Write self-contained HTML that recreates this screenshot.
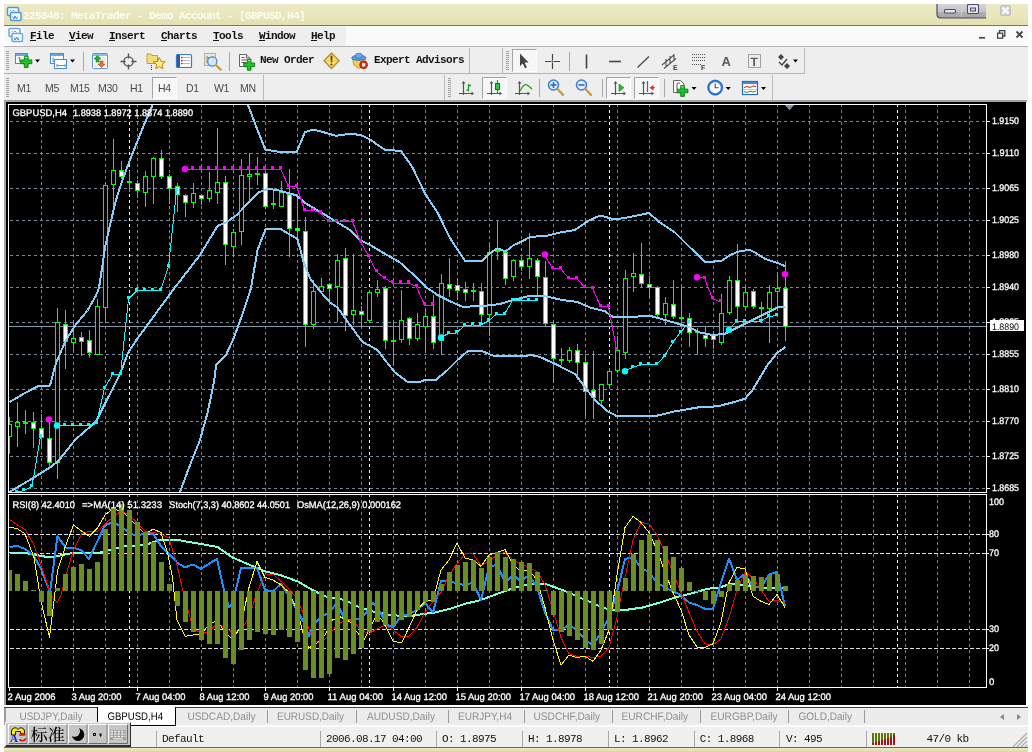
<!DOCTYPE html>
<html><head><meta charset="utf-8"><title>225848: MetaTrader - Demo Account - [GBPUSD,H4]</title>
<style>
*{box-sizing:border-box;margin:0;padding:0}
html,body{width:1032px;height:752px;overflow:hidden;background:#fff}
svg text{text-rendering:geometricPrecision}
.chart text[fill="#fff"]{stroke:#fff;stroke-width:.3px}
#win{will-change:transform}
body{position:relative;font-family:"Liberation Sans","Noto Sans CJK SC",sans-serif;font-size:11px;color:#000}
.abs{position:absolute}
#win{position:absolute;left:4px;top:4px;width:1024px;height:748px;background:#eeeeee;overflow:hidden}
#title{position:absolute;left:0;top:0;width:1024px;height:21px;background:linear-gradient(#ece9c8,#e9e5bc 60%,#e5e0b0)}
#title .t{position:absolute;left:19px;top:6px;font-family:"Liberation Mono",monospace;font-weight:bold;font-size:11px;color:#fdfcee;letter-spacing:-0.6px;white-space:pre}
#tline{position:absolute;left:0;top:21px;width:1024px;height:1px;background:#777770}
#menu{position:absolute;left:0;top:22px;width:1024px;height:20px;background:#fafafa}
#menu .m{position:absolute;top:4px;font-family:"Liberation Mono",monospace;font-weight:bold;font-size:11px;color:#111;white-space:pre;letter-spacing:-0.6px}
#menu .m::first-letter{text-decoration:underline}
#mline{position:absolute;left:0;top:42px;width:1024px;height:1px;background:#b4b4b4}
.tb{position:absolute;background:#eeeeee;height:26px}
.sep{position:absolute;width:1px;background:#a8a8a8}
.grip{position:absolute;width:3px;background:repeating-linear-gradient(#a0a0a0 0 1px,transparent 1px 2px)}
.tf{position:absolute;top:82px;font-size:10.5px;color:#4a4a4a;letter-spacing:-0.35px}
.btnp{position:absolute;border:1px solid #a4a4a4;border-right-color:#fdfdfd;border-bottom-color:#fdfdfd;background:#f7f7f7}
.tbt{position:absolute;font-family:"Liberation Mono",monospace;font-weight:bold;font-size:11px;letter-spacing:-0.6px;color:#111;white-space:pre}
#tabs{position:absolute;left:0;top:703px;width:1024px;height:17px;background:#f0f0f0}
.tab{position:absolute;top:2px;font-size:11px;color:#8c8c8c;white-space:pre}
.tsep{position:absolute;top:4px;width:1px;height:11px;background:#9a9a9a}
#status{position:absolute;left:0;top:720px;width:1024px;height:23px;background:#f0f0f0}
.st{position:absolute;top:5px;font-family:"Liberation Mono",monospace;font-size:11px;letter-spacing:-0.6px;color:#111;white-space:pre}
.ssep{position:absolute;top:3px;width:1px;height:17px;background:#a8a8a8}
</style></head>
<body>
<div id="win">
<div id="title"><div class="t">225848: MetaTrader - Demo Account - [GBPUSD,H4]</div></div><div id="tline"></div>
<div id="menu"><div class="abs" style="left:20px;top:1px;width:322px;height:19px;background:#eeeeee"></div><div class="m" style="left:26px">File</div><div class="m" style="left:65px">View</div><div class="m" style="left:105px">Insert</div><div class="m" style="left:157px">Charts</div><div class="m" style="left:209px">Tools</div><div class="m" style="left:255px">Window</div><div class="m" style="left:307px">Help</div></div><div id="mline"></div>
<div class="tb" style="left:0;top:43px;width:1024px;height:27px"></div>
<div class="abs" style="left:0;top:69px;width:801px;height:1px;background:#b4b4b4"></div><div class="abs" style="left:0;top:70px;width:802px;height:1px;background:#fafafa"></div>
<div class="tb" style="left:0;top:70px;width:1024px;height:26px"></div>
<div class="grip" style="left:2px;top:47px;height:19px"></div><div class="grip" style="left:502px;top:47px;height:19px"></div><div class="grip" style="left:2px;top:74px;height:19px"></div><div class="grip" style="left:444px;top:74px;height:19px"></div><div class="sep" style="left:79px;top:48px;height:19px"></div><div class="sep" style="left:225px;top:48px;height:19px"></div><div class="sep" style="left:565px;top:48px;height:19px"></div><div class="sep" style="left:535px;top:75px;height:18px"></div><div class="sep" style="left:598px;top:75px;height:18px"></div><div class="sep" style="left:660px;top:75px;height:18px"></div><div class="sep" style="left:465px;top:44px;height:25px;background:#b8b8b8"></div><div class="sep" style="left:498px;top:44px;height:25px;background:#b8b8b8"></div><div class="sep" style="left:800px;top:44px;height:25px;background:#b8b8b8"></div><div class="sep" style="left:259px;top:71px;height:25px;background:#b8b8b8"></div><div class="sep" style="left:440px;top:71px;height:25px;background:#b8b8b8"></div><div class="sep" style="left:768px;top:71px;height:25px;background:#b8b8b8"></div><div class="btnp" style="left:508px;top:45px;width:25px;height:23px"></div><div class="btnp" style="left:148px;top:73px;width:25px;height:22px"></div><div class="btnp" style="left:478px;top:73px;width:25px;height:22px"></div><div class="btnp" style="left:602px;top:73px;width:25px;height:22px"></div><div class="btnp" style="left:630px;top:73px;width:25px;height:22px"></div><div class="tf" style="left:13px;top:78px">M1</div><div class="tf" style="left:41px;top:78px">M5</div><div class="tf" style="left:66px;top:78px">M15</div><div class="tf" style="left:94px;top:78px">M30</div><div class="tf" style="left:126px;top:78px">H1</div><div class="tf" style="left:154px;top:78px">H4</div><div class="tf" style="left:182px;top:78px">D1</div><div class="tf" style="left:210px;top:78px">W1</div><div class="tf" style="left:236px;top:78px">MN</div><div class="tbt" style="left:256px;top:50px">New Order</div><div class="tbt" style="left:370px;top:50px">Expert Advisors</div>
<svg class="abs" style="left:0;top:42px" width="1024" height="56" viewBox="4 46 1024 56"><rect x="15.5" y="53.5" width="12" height="10" fill="#fff" stroke="#4a8ad0"/><rect x="16" y="54" width="11" height="2" fill="#6aa8e8"/><path d="M19.5 57v5M18 58.5l1.5-1.5 1.5 1.5" stroke="#7a8aa0" fill="none"/><path d="M24.3 56.199999999999996h3.8v3.6999999999999997h3.6999999999999997v3.8h-3.6999999999999997v3.6999999999999997h-3.8v-3.6999999999999997h-3.6999999999999997v-3.8h3.6999999999999997z" fill="#1fc02a" stroke="#0a7a12" stroke-width="0.9"/><path d="M24.8 57.4h2.8" stroke="#8cf08c" stroke-width="1"/><path d="M35 59.5h5l-2.5 3z" fill="#000"/><rect x="50.5" y="53.5" width="13" height="10" fill="#fff" stroke="#4a8ad0"/><rect x="51" y="54" width="12" height="2" fill="#6aa8e8"/><path d="M53 57v5M53 61.5h8" stroke="#7a8aa0" fill="none"/><rect x="54.5" y="59.5" width="12" height="9" fill="#fff" stroke="#4a8ad0"/><path d="M57 65.5h8M57 64v3M65 64v3" stroke="#7a8aa0" fill="none"/><path d="M70 59.5h5l-2.5 3z" fill="#000"/><rect x="92.5" y="53.5" width="15" height="15" rx="1" fill="#fff" stroke="#5a96dc"/><rect x="93" y="54" width="14" height="2" fill="#8abcf0"/><path d="M102 58h4M102 60h4M102 62h4M94 64h4M94 66h4" stroke="#d8d8d8"/><path d="M97.5 55.5l3.5 3.5h-2v3h-3v-3h-2z" fill="#22b030" stroke="#0c7a14" stroke-width="0.6"/><path d="M101.5 67.5l3.5-3.5h-2v-3h-3v3h-2z" fill="#f07030" stroke="#b03808" stroke-width="0.6"/><circle cx="128.5" cy="61.5" r="4.6" fill="none" stroke="#555" stroke-width="1.4"/><path d="M128.5 53.5v5M128.5 64.5v5M120.5 61.5h5M131.5 61.5h5" stroke="#555" stroke-width="1.4"/><path d="M147 56v-2h4l1 1.5h5.5v8h-10.5z" fill="#f4dc78" stroke="#b8962a" stroke-width="0.9"/><path d="M151.5 65v5" stroke="#333" stroke-dasharray="1 1"/><path d="M159.3 57.6l1.7 3.8 4.1.4-3.1 2.8.9 4.1-3.6-2.1-3.6 2.1.9-4.1-3.1-2.8 4.1-.4z" fill="#fff08a" stroke="#b8860b" stroke-width="1"/><rect x="176.5" y="54.5" width="15" height="13" rx="1" fill="#fff" stroke="#3a78c8" stroke-width="1.2"/><rect x="177" y="55" width="3" height="12" fill="#2a5aa8"/><path d="M181 57.5h9M181 60.5h9M181 63.5h9" stroke="#a8b8e0"/><path d="M181 57.5h1.5M181 60.5h1.5M181 63.5h1.5" stroke="#e02020" stroke-width="1.4"/><rect x="204.5" y="53.5" width="11" height="12" fill="#ece6d4" stroke="#b8b09a"/><path d="M207 56v7M213 56v7M207 57.5h6" stroke="#8a8a8a" fill="none"/><circle cx="212.3" cy="61.5" r="4.6" fill="#d8e6fa" fill-opacity="0.85" stroke="#4a8ae0" stroke-width="1.3"/><path d="M215.8 65l5 4.6" stroke="#c8a038" stroke-width="2.2" stroke-linecap="round"/><path d="M239.5 54.5h7l3.5 3.5v8.5h-10.5z" fill="#fff" stroke="#666"/><path d="M246.5 54.5v3.5h3.5" fill="#ddd" stroke="#666"/><path d="M241.5 57.5h3M241.5 60h6M241.5 62.5h5" stroke="#555" stroke-width="1.2"/><path d="M247.39999999999998 59.4h3.6v3.6000000000000005h3.6000000000000005v3.6h-3.6000000000000005v3.6000000000000005h-3.6v-3.6000000000000005h-3.6000000000000005v-3.6h3.6000000000000005z" fill="#1fc02a" stroke="#0a7a12" stroke-width="0.9"/><path d="M247.89999999999998 60.6h2.6" stroke="#8cf08c" stroke-width="1"/><path d="M331.5 53l7.5 7.7-7.5 7.7-7.5-7.7z" fill="#f8e070" stroke="#b89020" stroke-width="1.4"/><path d="M331.5 56.5v5" stroke="#7a2a10" stroke-width="1.8" stroke-linecap="round"/><circle cx="331.5" cy="64.5" r="1.1" fill="#7a2a10"/><path d="M326 60.7h11" stroke="#d8b840" stroke-width="0.7"/><path d="M352.5 59h13l-1.5 6-5 3.5-5-3.5z" fill="#f4d050" stroke="#b88a18" stroke-width="0.8"/><ellipse cx="358.8" cy="57.8" rx="7.2" ry="2.6" fill="#5a9ae0" stroke="#2a68b8" stroke-width="0.7"/><ellipse cx="358.8" cy="55.8" rx="3.6" ry="2.6" fill="#6aaaf0" stroke="#2a68b8" stroke-width="0.7"/><circle cx="363.6" cy="64.8" r="3.9" fill="#e03010" stroke="#a01800" stroke-width="0.8"/><rect x="362" y="63.2" width="3.2" height="3.2" fill="#fff"/><path d="M520 53.5v12.5l2.8-2.6 2.2 4.9 1.9-.9-2.2-4.8h3.9z" fill="#444"/><path d="M552.5 54v15M545 61.5h15" stroke="#444" stroke-width="1.2"/><rect x="551.5" y="60.5" width="2" height="2" fill="#eee"/><rect x="552" y="61" width="1" height="1" fill="#444"/><path d="M586.5 54.5v14" stroke="#444" stroke-width="1.6"/><path d="M609 61.5h12" stroke="#444" stroke-width="1.6"/><path d="M637.5 67.5l11.5-11" stroke="#555" stroke-width="1.5"/><path d="M662 65l12-10M664 68.5l12-10M666 59v8M670 56v8M674 54v7" stroke="#555" stroke-width="1.1" fill="none"/><text x="673" y="70" font-family="Liberation Sans,sans-serif" font-weight="bold" font-size="7" fill="#333">E</text><path d="M692 54.5h13M692 57.5h13M692 60.5h13M692 64.5h9" stroke="#555" stroke-dasharray="1 1"/><text x="701" y="70" font-family="Liberation Sans,sans-serif" font-weight="bold" font-size="7" fill="#333">F</text><text x="721.5" y="66" font-family="Liberation Sans,sans-serif" font-weight="bold" font-size="13" fill="#5a5a5a">A</text><rect x="748.5" y="54.5" width="12" height="13" fill="none" stroke="#555" stroke-dasharray="1 1"/><text x="750.6" y="66" font-family="Liberation Sans,sans-serif" font-weight="bold" font-size="12" fill="#5a5a5a">T</text><path d="M778 57l3-3 3 3-3 3zM784 66l3-3 3 3-3 3z" fill="#444"/><path d="M779 62l3 3 5-6" stroke="#444" stroke-width="1.4" fill="none"/><path d="M793 59.5h5l-2.5 3z" fill="#000"/><path d="M463.5 82v13M459 93.5h14" stroke="#555" stroke-width="1.2" fill="none"/><path d="M463.5 81l-2 2.5h4zM474 93.5l-2.5-2v4z" fill="#555"/><path d="M468.5 84v7.5M468.5 85.5h2.5M466.5 90h2" stroke="#1aa020" stroke-width="1.3" fill="none"/><path d="M491.5 82v13M487 93.5h14" stroke="#555" stroke-width="1.2" fill="none"/><path d="M491.5 81l-2 2.5h4zM502 93.5l-2.5-2v4z" fill="#555"/><path d="M497.5 80v13" stroke="#1aa020" stroke-width="1.2"/><rect x="495.5" y="83.5" width="4" height="6" fill="#30c838" stroke="#0a7a12"/><path d="M519.5 82v13M515 93.5h14" stroke="#555" stroke-width="1.2" fill="none"/><path d="M519.5 81l-2 2.5h4zM530 93.5l-2.5-2v4z" fill="#555"/><path d="M520 91q4-8 7-6t5 4" stroke="#1aa020" stroke-width="1.2" fill="none"/><circle cx="553.5" cy="85" r="5" fill="#e4effc" stroke="#3a80e0" stroke-width="1.6"/><path d="M557.5 89l5.5 5.8" stroke="#c8a038" stroke-width="2.4" stroke-linecap="round"/><path d="M550.5 85h6" stroke="#2a68c8" stroke-width="1.6"/><path d="M553.5 82v6" stroke="#2a68c8" stroke-width="1.6"/><circle cx="581.5" cy="85" r="5" fill="#e4effc" stroke="#3a80e0" stroke-width="1.6"/><path d="M585.5 89l5.5 5.8" stroke="#c8a038" stroke-width="2.4" stroke-linecap="round"/><path d="M578.5 85h6" stroke="#2a68c8" stroke-width="1.6"/><path d="M615.5 82v13M611 93.5h14" stroke="#555" stroke-width="1.2" fill="none"/><path d="M615.5 81l-2 2.5h4zM626 93.5l-2.5-2v4z" fill="#555"/><path d="M619 84l5 3.7-5 3.7z" fill="#28c030" stroke="#0a7a12" stroke-width="0.6"/><path d="M643.5 82v13M639 93.5h14" stroke="#555" stroke-width="1.2" fill="none"/><path d="M643.5 81l-2 2.5h4zM654 93.5l-2.5-2v4z" fill="#555"/><path d="M647.5 81v11" stroke="#2a68c8" stroke-width="1.2"/><path d="M649.5 87.7l4-2.7v5.4z" fill="#d03010"/><path d="M652 87.7h3" stroke="#d03010"/><path d="M673.500 80.500h7l3.500 3.500v8.500h-10.500z" fill="#fff" stroke="#666"/><path d="M677 83.500v6M677 83.500q2-1.500 3 0" stroke="#555" fill="none"/><path d="M680.7 85.6h3.6v3.6000000000000005h3.6000000000000005v3.6h-3.6000000000000005v3.6000000000000005h-3.6v-3.6000000000000005h-3.6000000000000005v-3.6h3.6000000000000005z" fill="#1fc02a" stroke="#0a7a12" stroke-width="0.9"/><path d="M681.2 86.8h2.6" stroke="#8cf08c" stroke-width="1"/><path d="M691.5 87h5l-2.5 3z" fill="#000"/><circle cx="715.2" cy="87.6" r="6.6" fill="#fff" stroke="#2a78e0" stroke-width="2"/><circle cx="715.2" cy="87.6" r="7.6" fill="none" stroke="#1a58b0" stroke-width="0.6"/><path d="M715.2 83.500v4.300h3.300" stroke="#444" stroke-width="1.1" fill="none"/><path d="M725.7 87h5l-2.5 3z" fill="#000"/><rect x="742.5" y="81.500" width="15" height="13" fill="#fff" stroke="#2a68c8" stroke-width="1.2"/><rect x="743" y="82" width="14" height="2" fill="#4a88e0"/><path d="M744 87.500l3-1 3 1 3-1.500 3 .5" stroke="#c82010" fill="none"/><path d="M744 91.500l3 1 3-1.500 3 1 3-1" stroke="#18a028" fill="none"/><path d="M743 89.500h14" stroke="#ccc"/><path d="M761 87h5l-2.5 3z" fill="#000"/></svg><svg class="abs" style="left:0;top:0" width="1024" height="42" viewBox="4 4 1024 42"><rect x="7.5" y="7.5" width="11" height="8" rx="1.2" fill="#fff" stroke="#4a96e0" stroke-width="1.5" /><path d="M9.5 11.5l1.5-1.5M12 11.5l1.5-1.5 1.500 1.500" stroke="#4a96e0" stroke-width="0.9" fill="none"/><rect x="10.5" y="12.5" width="10.500" height="8" rx="1.2" fill="#fff" stroke="#4a96e0" stroke-width="1.5" /><path d="M12.5 16.5l1.300 2.500 1.300-3 1.300 3 1.300-2.500" stroke="#3a78d0" stroke-width="0.9" fill="none"/><rect x="9" y="28.5" width="11" height="8" rx="1.2" fill="#fff" stroke="#4a96e0" stroke-width="1.5" stroke-opacity="0.85"/><path d="M11 32.5l1.5-1.5M13.5 32.5l1.5-1.5 1.500 1.500" stroke="#4a96e0" stroke-width="0.9" fill="none"/><rect x="12" y="33.5" width="10.500" height="8" rx="1.2" fill="#fff" stroke="#4a96e0" stroke-width="1.5" stroke-opacity="0.85"/><path d="M14 37.5l1.300 2.500 1.300-3 1.300 3 1.300-2.500" stroke="#3a78d0" stroke-width="0.9" fill="none"/><defs><linearGradient id="gb" x1="0" y1="0" x2="0" y2="1"><stop offset="0" stop-color="#d4d4d8"/><stop offset="0.55" stop-color="#c4c4c8"/><stop offset="0.56" stop-color="#b0b0b6"/><stop offset="1" stop-color="#a4a4ac"/></linearGradient></defs><path d="M937 4v10q0 4 4 4h45v-14z" fill="url(#gb)"/><path d="M937 4v10q0 4 4 4h45" fill="none" stroke="#4a4a5a" stroke-width="1.2"/><path d="M961.500 4v13" stroke="#d0d0d4" stroke-width="1"/><rect x="944.500" y="9.500" width="11" height="3.500" rx="1" fill="#e8e8ec" stroke="#4a4a68" stroke-width="1.1"/><rect x="967.500" y="4.500" width="11" height="9" rx="1" fill="#e8e8ec" stroke="#4a4a68" stroke-width="1.1"/><rect x="970.500" y="8" width="5" height="3" fill="#d0d0d8" stroke="#4a4a68" stroke-width="1"/><rect x="1000.500" y="5.500" width="10" height="10" rx="1.500" fill="#d0d0d0" stroke="#c0c0c0"/><path d="M1002.500 7.500l6 6M1008.500 7.500l-6 6" stroke="#fff" stroke-width="2"/><path d="M979 37.800h6" stroke="#444" stroke-width="1.700"/><path d="M999.500 33v-2.300h5.300v5.300h-2" fill="none" stroke="#444" stroke-width="1.300"/><rect x="997.600" y="33.200" width="5" height="5" fill="none" stroke="#444" stroke-width="1.300"/><path d="M1016.500 31.500l6 6M1022.500 31.500l-6 6" stroke="#444" stroke-width="1.800"/></svg><div class="abs" style="left:0;top:96px;width:1024px;height:607px;background:#fff"></div><div class="abs" style="left:0;top:96px;width:1023px;height:2px;background:#a2a2a8"></div><div class="abs" style="left:0;top:96px;width:2px;height:605px;background:#a2a2a8"></div><svg class="abs chart" style="left:2px;top:98px" width="1020" height="603" viewBox="6 102 1020 603" shape-rendering="crispEdges" font-family="Liberation Sans, sans-serif"><rect x="6" y="102" width="1020" height="603" fill="#000"/><defs><clipPath id="cm"><rect x="9" y="105" width="977" height="387"/></clipPath><clipPath id="cs"><rect x="9" y="495" width="977" height="192"/></clipPath></defs><path d="M10 121.5H986M10 153.5H986M10 188.5H986M10 220.5H986M10 255.5H986M10 287.5H986M10 322.5H986M10 354.5H986M10 389.5H986M10 421.5H986M10 456.5H986M10 488.5H986" stroke="#778899" stroke-width="1" stroke-dasharray="3 3" fill="none"/><path d="M41.5 104V492M41.5 494V687M73.5 104V492M73.5 494V687M105.5 104V492M105.5 494V687M137.5 104V492M137.5 494V687M169.5 104V492M169.5 494V687M201.5 104V492M201.5 494V687M233.5 104V492M233.5 494V687M265.5 104V492M265.5 494V687M297.5 104V492M297.5 494V687M329.5 104V492M329.5 494V687M361.5 104V492M361.5 494V687M393.5 104V492M393.5 494V687M425.5 104V492M425.5 494V687M457.5 104V492M457.5 494V687M489.5 104V492M489.5 494V687M521.5 104V492M521.5 494V687M553.5 104V492M553.5 494V687M585.5 104V492M585.5 494V687M617.5 104V492M617.5 494V687M649.5 104V492M649.5 494V687M681.5 104V492M681.5 494V687M713.5 104V492M713.5 494V687M745.5 104V492M745.5 494V687M777.5 104V492M777.5 494V687M809.5 104V492M809.5 494V687M841.5 104V492M841.5 494V687M873.5 104V492M873.5 494V687M905.5 104V492M905.5 494V687M937.5 104V492M937.5 494V687M969.5 104V492M969.5 494V687" stroke="#778899" stroke-width="1" stroke-dasharray="3 3" fill="none"/><path d="M129.5 104V492M129.5 494V687M369.5 104V492M369.5 494V687M609.5 104V492M609.5 494V687M897.5 104V492M897.5 494V687" stroke="#fff" stroke-width="1" stroke-dasharray="3 3" fill="none"/><path d="M10 534.5H986M10 553.5H986M10 629.5H986M10 648.5H986" stroke="#e0e0e0" stroke-width="1" stroke-dasharray="4 2" fill="none"/><g clip-path="url(#cm)"><rect x="9" y="326" width="977" height="1" fill="#8596a8"/><rect x="9" y="417" width="1" height="37" fill="#0f0"/><rect x="7" y="424" width="5" height="13" fill="#0f0"/><rect x="8" y="425" width="3" height="11" fill="#000"/><rect x="17" y="402" width="1" height="45" fill="#0f0"/><rect x="15" y="422" width="5" height="5" fill="#0f0"/><rect x="16" y="423" width="3" height="3" fill="#000"/><rect x="25" y="410" width="1" height="24" fill="#0f0"/><rect x="23" y="422" width="5" height="2" fill="#0f0"/><rect x="33" y="412" width="1" height="36" fill="#0f0"/><rect x="31" y="422" width="5" height="7" fill="#0f0"/><rect x="32" y="423" width="3" height="5" fill="#fff"/><rect x="41" y="414" width="1" height="35" fill="#0f0"/><rect x="39" y="428" width="5" height="10" fill="#0f0"/><rect x="40" y="429" width="3" height="8" fill="#fff"/><rect x="49" y="422" width="1" height="45" fill="#0f0"/><rect x="47" y="438" width="5" height="25" fill="#0f0"/><rect x="48" y="439" width="3" height="23" fill="#fff"/><rect x="57" y="308" width="1" height="171" fill="#0f0"/><rect x="55" y="322" width="5" height="141" fill="#0f0"/><rect x="56" y="323" width="3" height="139" fill="#000"/><rect x="65" y="310" width="1" height="59" fill="#0f0"/><rect x="63" y="324" width="5" height="18" fill="#0f0"/><rect x="64" y="325" width="3" height="16" fill="#fff"/><rect x="73" y="320" width="1" height="30" fill="#0f0"/><rect x="71" y="338" width="5" height="5" fill="#0f0"/><rect x="72" y="339" width="3" height="3" fill="#000"/><rect x="81" y="332" width="1" height="24" fill="#0f0"/><rect x="79" y="337" width="5" height="5" fill="#0f0"/><rect x="80" y="338" width="3" height="3" fill="#fff"/><rect x="89" y="330" width="1" height="28" fill="#0f0"/><rect x="87" y="340" width="5" height="13" fill="#0f0"/><rect x="88" y="341" width="3" height="11" fill="#fff"/><rect x="97" y="299" width="1" height="56" fill="#0f0"/><rect x="95" y="306" width="5" height="49" fill="#0f0"/><rect x="96" y="307" width="3" height="47" fill="#000"/><rect x="105" y="182" width="1" height="141" fill="#0f0"/><rect x="103" y="185" width="5" height="123" fill="#0f0"/><rect x="104" y="186" width="3" height="121" fill="#000"/><rect x="113" y="139" width="1" height="69" fill="#0f0"/><rect x="111" y="170" width="5" height="15" fill="#0f0"/><rect x="112" y="171" width="3" height="13" fill="#000"/><rect x="121" y="161" width="1" height="18" fill="#0f0"/><rect x="119" y="170" width="5" height="7" fill="#0f0"/><rect x="120" y="171" width="3" height="5" fill="#fff"/><rect x="129" y="171" width="1" height="21" fill="#0f0"/><rect x="127" y="181" width="5" height="2" fill="#0f0"/><rect x="137" y="180" width="1" height="18" fill="#0f0"/><rect x="135" y="183" width="5" height="8" fill="#0f0"/><rect x="136" y="184" width="3" height="6" fill="#fff"/><rect x="145" y="171" width="1" height="36" fill="#0f0"/><rect x="143" y="176" width="5" height="17" fill="#0f0"/><rect x="144" y="177" width="3" height="15" fill="#000"/><rect x="153" y="157" width="1" height="47" fill="#0f0"/><rect x="151" y="158" width="5" height="19" fill="#0f0"/><rect x="152" y="159" width="3" height="17" fill="#000"/><rect x="161" y="150" width="1" height="29" fill="#0f0"/><rect x="159" y="158" width="5" height="19" fill="#0f0"/><rect x="160" y="159" width="3" height="17" fill="#fff"/><rect x="169" y="174" width="1" height="30" fill="#0f0"/><rect x="167" y="176" width="5" height="13" fill="#0f0"/><rect x="168" y="177" width="3" height="11" fill="#fff"/><rect x="177" y="183" width="1" height="29" fill="#0f0"/><rect x="175" y="186" width="5" height="9" fill="#0f0"/><rect x="176" y="187" width="3" height="7" fill="#fff"/><rect x="185" y="194" width="1" height="23" fill="#0f0"/><rect x="183" y="195" width="5" height="8" fill="#0f0"/><rect x="184" y="196" width="3" height="6" fill="#fff"/><rect x="193" y="183" width="1" height="25" fill="#0f0"/><rect x="191" y="193" width="5" height="10" fill="#0f0"/><rect x="192" y="194" width="3" height="8" fill="#000"/><rect x="201" y="194" width="1" height="11" fill="#0f0"/><rect x="199" y="195" width="5" height="4" fill="#0f0"/><rect x="200" y="196" width="3" height="2" fill="#fff"/><rect x="209" y="172" width="1" height="30" fill="#0f0"/><rect x="207" y="190" width="5" height="9" fill="#0f0"/><rect x="208" y="191" width="3" height="7" fill="#000"/><rect x="217" y="128" width="1" height="76" fill="#0f0"/><rect x="215" y="182" width="5" height="11" fill="#0f0"/><rect x="216" y="183" width="3" height="9" fill="#000"/><rect x="225" y="176" width="1" height="89" fill="#0f0"/><rect x="223" y="182" width="5" height="63" fill="#0f0"/><rect x="224" y="183" width="3" height="61" fill="#fff"/><rect x="233" y="229" width="1" height="28" fill="#0f0"/><rect x="231" y="232" width="5" height="15" fill="#0f0"/><rect x="232" y="233" width="3" height="13" fill="#000"/><rect x="241" y="159" width="1" height="86" fill="#0f0"/><rect x="239" y="175" width="5" height="57" fill="#0f0"/><rect x="240" y="176" width="3" height="55" fill="#000"/><rect x="249" y="153" width="1" height="49" fill="#0f0"/><rect x="247" y="174" width="5" height="3" fill="#0f0"/><rect x="248" y="175" width="3" height="1" fill="#000"/><rect x="257" y="157" width="1" height="28" fill="#0f0"/><rect x="255" y="173" width="5" height="2" fill="#0f0"/><rect x="265" y="172" width="1" height="37" fill="#0f0"/><rect x="263" y="173" width="5" height="34" fill="#0f0"/><rect x="264" y="174" width="3" height="32" fill="#fff"/><rect x="273" y="190" width="1" height="19" fill="#0f0"/><rect x="271" y="203" width="5" height="2" fill="#0f0"/><rect x="281" y="181" width="1" height="26" fill="#0f0"/><rect x="279" y="192" width="5" height="15" fill="#0f0"/><rect x="280" y="193" width="3" height="13" fill="#000"/><rect x="289" y="169" width="1" height="88" fill="#0f0"/><rect x="287" y="194" width="5" height="35" fill="#0f0"/><rect x="288" y="195" width="3" height="33" fill="#fff"/><rect x="297" y="198" width="1" height="43" fill="#0f0"/><rect x="295" y="228" width="5" height="3" fill="#0f0"/><rect x="296" y="229" width="3" height="1" fill="#fff"/><rect x="305" y="217" width="1" height="130" fill="#0f0"/><rect x="303" y="231" width="5" height="94" fill="#0f0"/><rect x="304" y="232" width="3" height="92" fill="#fff"/><rect x="313" y="280" width="1" height="49" fill="#0f0"/><rect x="311" y="291" width="5" height="34" fill="#0f0"/><rect x="312" y="292" width="3" height="32" fill="#000"/><rect x="321" y="278" width="1" height="16" fill="#0f0"/><rect x="319" y="286" width="5" height="6" fill="#0f0"/><rect x="320" y="287" width="3" height="4" fill="#000"/><rect x="329" y="283" width="1" height="18" fill="#0f0"/><rect x="327" y="284" width="5" height="5" fill="#0f0"/><rect x="328" y="285" width="3" height="3" fill="#fff"/><rect x="337" y="254" width="1" height="68" fill="#0f0"/><rect x="335" y="260" width="5" height="27" fill="#0f0"/><rect x="336" y="261" width="3" height="25" fill="#000"/><rect x="345" y="248" width="1" height="83" fill="#0f0"/><rect x="343" y="258" width="5" height="58" fill="#0f0"/><rect x="344" y="259" width="3" height="56" fill="#fff"/><rect x="353" y="254" width="1" height="71" fill="#0f0"/><rect x="351" y="310" width="5" height="5" fill="#0f0"/><rect x="352" y="311" width="3" height="3" fill="#000"/><rect x="361" y="306" width="1" height="22" fill="#0f0"/><rect x="359" y="311" width="5" height="4" fill="#0f0"/><rect x="360" y="312" width="3" height="2" fill="#fff"/><rect x="369" y="290" width="1" height="33" fill="#0f0"/><rect x="367" y="292" width="5" height="29" fill="#0f0"/><rect x="368" y="293" width="3" height="27" fill="#000"/><rect x="377" y="280" width="1" height="17" fill="#0f0"/><rect x="375" y="289" width="5" height="4" fill="#0f0"/><rect x="376" y="290" width="3" height="2" fill="#000"/><rect x="385" y="286" width="1" height="63" fill="#0f0"/><rect x="383" y="288" width="5" height="53" fill="#0f0"/><rect x="384" y="289" width="3" height="51" fill="#fff"/><rect x="393" y="322" width="1" height="44" fill="#0f0"/><rect x="391" y="340" width="5" height="2" fill="#0f0"/><rect x="401" y="290" width="1" height="53" fill="#0f0"/><rect x="399" y="320" width="5" height="20" fill="#0f0"/><rect x="400" y="321" width="3" height="18" fill="#000"/><rect x="409" y="317" width="1" height="28" fill="#0f0"/><rect x="407" y="318" width="5" height="21" fill="#0f0"/><rect x="408" y="319" width="3" height="19" fill="#fff"/><rect x="417" y="313" width="1" height="28" fill="#0f0"/><rect x="415" y="324" width="5" height="15" fill="#0f0"/><rect x="416" y="325" width="3" height="13" fill="#000"/><rect x="425" y="310" width="1" height="43" fill="#0f0"/><rect x="423" y="316" width="5" height="11" fill="#0f0"/><rect x="424" y="317" width="3" height="9" fill="#000"/><rect x="433" y="295" width="1" height="54" fill="#0f0"/><rect x="431" y="316" width="5" height="27" fill="#0f0"/><rect x="432" y="317" width="3" height="25" fill="#fff"/><rect x="441" y="274" width="1" height="81" fill="#0f0"/><rect x="439" y="283" width="5" height="58" fill="#0f0"/><rect x="440" y="284" width="3" height="56" fill="#000"/><rect x="449" y="258" width="1" height="39" fill="#0f0"/><rect x="447" y="284" width="5" height="5" fill="#0f0"/><rect x="448" y="285" width="3" height="3" fill="#fff"/><rect x="457" y="278" width="1" height="22" fill="#0f0"/><rect x="455" y="285" width="5" height="6" fill="#0f0"/><rect x="456" y="286" width="3" height="4" fill="#fff"/><rect x="465" y="282" width="1" height="19" fill="#0f0"/><rect x="463" y="289" width="5" height="4" fill="#0f0"/><rect x="464" y="290" width="3" height="2" fill="#fff"/><rect x="473" y="283" width="1" height="18" fill="#0f0"/><rect x="471" y="290" width="5" height="2" fill="#0f0"/><rect x="481" y="283" width="1" height="42" fill="#0f0"/><rect x="479" y="291" width="5" height="24" fill="#0f0"/><rect x="480" y="292" width="3" height="22" fill="#fff"/><rect x="489" y="245" width="1" height="91" fill="#0f0"/><rect x="487" y="252" width="5" height="63" fill="#0f0"/><rect x="488" y="253" width="3" height="61" fill="#000"/><rect x="497" y="221" width="1" height="39" fill="#0f0"/><rect x="495" y="250" width="5" height="2" fill="#0f0"/><rect x="505" y="250" width="1" height="35" fill="#0f0"/><rect x="503" y="252" width="5" height="27" fill="#0f0"/><rect x="504" y="253" width="3" height="25" fill="#fff"/><rect x="513" y="259" width="1" height="22" fill="#0f0"/><rect x="511" y="260" width="5" height="17" fill="#0f0"/><rect x="512" y="261" width="3" height="15" fill="#000"/><rect x="521" y="257" width="1" height="14" fill="#0f0"/><rect x="519" y="260" width="5" height="7" fill="#0f0"/><rect x="520" y="261" width="3" height="5" fill="#fff"/><rect x="529" y="233" width="1" height="46" fill="#0f0"/><rect x="527" y="258" width="5" height="9" fill="#0f0"/><rect x="528" y="259" width="3" height="7" fill="#000"/><rect x="537" y="258" width="1" height="37" fill="#0f0"/><rect x="535" y="260" width="5" height="17" fill="#0f0"/><rect x="536" y="261" width="3" height="15" fill="#fff"/><rect x="545" y="261" width="1" height="65" fill="#0f0"/><rect x="543" y="277" width="5" height="47" fill="#0f0"/><rect x="544" y="278" width="3" height="45" fill="#fff"/><rect x="553" y="320" width="1" height="63" fill="#0f0"/><rect x="551" y="324" width="5" height="35" fill="#0f0"/><rect x="552" y="325" width="3" height="33" fill="#fff"/><rect x="561" y="348" width="1" height="17" fill="#0f0"/><rect x="559" y="359" width="5" height="2" fill="#0f0"/><rect x="569" y="347" width="1" height="16" fill="#0f0"/><rect x="567" y="350" width="5" height="11" fill="#0f0"/><rect x="568" y="351" width="3" height="9" fill="#000"/><rect x="577" y="344" width="1" height="36" fill="#0f0"/><rect x="575" y="350" width="5" height="13" fill="#0f0"/><rect x="576" y="351" width="3" height="11" fill="#fff"/><rect x="585" y="354" width="1" height="62" fill="#0f0"/><rect x="583" y="362" width="5" height="30" fill="#0f0"/><rect x="584" y="363" width="3" height="28" fill="#fff"/><rect x="593" y="351" width="1" height="68" fill="#0f0"/><rect x="591" y="390" width="5" height="8" fill="#0f0"/><rect x="592" y="391" width="3" height="6" fill="#fff"/><rect x="601" y="384" width="1" height="22" fill="#0f0"/><rect x="599" y="384" width="5" height="17" fill="#0f0"/><rect x="600" y="385" width="3" height="15" fill="#000"/><rect x="609" y="368" width="1" height="21" fill="#0f0"/><rect x="607" y="371" width="5" height="14" fill="#0f0"/><rect x="608" y="372" width="3" height="12" fill="#000"/><rect x="617" y="336" width="1" height="37" fill="#0f0"/><rect x="615" y="350" width="5" height="21" fill="#0f0"/><rect x="616" y="351" width="3" height="19" fill="#000"/><rect x="625" y="270" width="1" height="89" fill="#0f0"/><rect x="623" y="278" width="5" height="75" fill="#0f0"/><rect x="624" y="279" width="3" height="73" fill="#000"/><rect x="633" y="253" width="1" height="39" fill="#0f0"/><rect x="631" y="273" width="5" height="4" fill="#0f0"/><rect x="632" y="274" width="3" height="2" fill="#000"/><rect x="641" y="243" width="1" height="44" fill="#0f0"/><rect x="639" y="274" width="5" height="10" fill="#0f0"/><rect x="640" y="275" width="3" height="8" fill="#fff"/><rect x="649" y="276" width="1" height="21" fill="#0f0"/><rect x="647" y="284" width="5" height="4" fill="#0f0"/><rect x="648" y="285" width="3" height="2" fill="#fff"/><rect x="657" y="286" width="1" height="31" fill="#0f0"/><rect x="655" y="287" width="5" height="28" fill="#0f0"/><rect x="656" y="288" width="3" height="26" fill="#fff"/><rect x="665" y="297" width="1" height="28" fill="#0f0"/><rect x="663" y="303" width="5" height="12" fill="#0f0"/><rect x="664" y="304" width="3" height="10" fill="#000"/><rect x="673" y="280" width="1" height="39" fill="#0f0"/><rect x="671" y="304" width="5" height="13" fill="#0f0"/><rect x="672" y="305" width="3" height="11" fill="#fff"/><rect x="681" y="286" width="1" height="40" fill="#0f0"/><rect x="679" y="317" width="5" height="2" fill="#0f0"/><rect x="689" y="313" width="1" height="34" fill="#0f0"/><rect x="687" y="318" width="5" height="15" fill="#0f0"/><rect x="688" y="319" width="3" height="13" fill="#fff"/><rect x="697" y="328" width="1" height="27" fill="#0f0"/><rect x="695" y="331" width="5" height="2" fill="#0f0"/><rect x="705" y="326" width="1" height="21" fill="#0f0"/><rect x="703" y="335" width="5" height="4" fill="#0f0"/><rect x="704" y="336" width="3" height="2" fill="#fff"/><rect x="713" y="331" width="1" height="18" fill="#0f0"/><rect x="711" y="335" width="5" height="5" fill="#0f0"/><rect x="712" y="336" width="3" height="3" fill="#fff"/><rect x="721" y="294" width="1" height="51" fill="#0f0"/><rect x="719" y="313" width="5" height="30" fill="#0f0"/><rect x="720" y="314" width="3" height="28" fill="#000"/><rect x="729" y="276" width="1" height="39" fill="#0f0"/><rect x="727" y="280" width="5" height="33" fill="#0f0"/><rect x="728" y="281" width="3" height="31" fill="#000"/><rect x="737" y="244" width="1" height="77" fill="#0f0"/><rect x="735" y="280" width="5" height="27" fill="#0f0"/><rect x="736" y="281" width="3" height="25" fill="#fff"/><rect x="745" y="286" width="1" height="23" fill="#0f0"/><rect x="743" y="292" width="5" height="15" fill="#0f0"/><rect x="744" y="293" width="3" height="13" fill="#000"/><rect x="753" y="289" width="1" height="20" fill="#0f0"/><rect x="751" y="291" width="5" height="16" fill="#0f0"/><rect x="752" y="292" width="3" height="14" fill="#fff"/><rect x="761" y="302" width="1" height="21" fill="#0f0"/><rect x="759" y="307" width="5" height="2" fill="#0f0"/><rect x="769" y="285" width="1" height="58" fill="#0f0"/><rect x="767" y="292" width="5" height="17" fill="#0f0"/><rect x="768" y="293" width="3" height="15" fill="#000"/><rect x="777" y="272" width="1" height="37" fill="#0f0"/><rect x="775" y="288" width="5" height="4" fill="#0f0"/><rect x="776" y="289" width="3" height="2" fill="#000"/><rect x="785" y="261" width="1" height="80" fill="#0f0"/><rect x="783" y="288" width="5" height="39" fill="#0f0"/><rect x="784" y="289" width="3" height="37" fill="#fff"/><polyline points="9.5,402.0 25.0,393.0 38.5,386.0 50.0,385.5 56.0,363.0 65.0,342.0 75.0,325.5 87.5,310.5 96.0,295.5 99.0,288.0 102.5,265.0 105.0,247.5 110.0,225.0 116.0,200.0 122.5,180.0 130.0,160.0 137.5,141.0 145.0,122.5 152.5,105.0 155.0,96.0" fill="none" stroke="#87cefa" stroke-width="2" stroke-linejoin="round"/><polyline points="244.0,96.0 250.0,110.0 257.5,130.0 265.3,149.6 277.2,151.6 296.8,151.6 305.0,132.0 313.5,129.6 321.0,131.5 336.0,135.8 350.0,133.8 361.0,135.0 370.0,139.5 385.0,150.0 401.0,150.8 412.5,167.5 425.0,193.5 437.5,212.5 450.0,238.0 465.0,260.8 482.5,260.8 489.4,253.7 497.4,248.3 505.4,251.6 513.4,245.3 521.4,241.7 529.4,237.3 537.5,236.3 549.0,235.4 558.5,232.7 575.0,230.0 587.5,221.3 600.0,215.5 615.0,219.5 630.0,217.0 648.8,213.0 660.0,222.5 675.0,232.5 690.0,247.5 705.0,261.8 721.0,261.3 730.0,255.0 740.0,251.0 750.0,250.0 755.0,252.5 765.0,258.8 777.5,263.0 785.5,266.3" fill="none" stroke="#87cefa" stroke-width="2" stroke-linejoin="round"/><polyline points="9.5,492.0 34.0,477.5 50.0,467.5 58.8,460.5 75.0,440.0 96.0,421.5 120.0,374.0 128.0,353.0 136.0,340.5 173.0,290.0 200.0,255.0 217.5,226.0 226.0,222.5 236.7,215.0 250.0,201.0 258.2,192.6 268.3,188.9 277.2,190.1 296.1,195.2 305.0,202.8 312.5,207.5 324.0,214.0 330.0,218.0 350.0,230.0 360.0,240.0 370.0,245.0 385.0,253.8 400.0,262.5 412.5,273.8 425.0,286.3 437.5,295.0 450.0,301.3 462.5,306.8 475.0,306.3 487.5,305.5 500.0,304.0 512.5,300.0 530.0,295.8 545.0,296.3 562.5,300.0 577.5,302.0 590.0,307.5 605.0,311.3 613.8,317.5 630.0,317.0 650.0,315.8 665.0,320.0 680.0,324.3 690.0,327.5 700.0,332.5 712.5,335.0 725.0,333.8 737.5,327.5 752.5,320.0 765.0,313.8 777.5,307.5 785.5,306.8" fill="none" stroke="#87cefa" stroke-width="2" stroke-linejoin="round"/><polyline points="180.0,492.0 190.0,465.0 200.0,440.0 207.5,413.0 213.8,383.0 216.3,364.3 226.3,354.3 233.8,338.0 243.8,310.5 251.0,288.0 257.5,250.0 265.5,229.3 281.0,229.3 297.5,239.0 303.8,262.5 310.0,278.5 320.0,291.3 330.0,302.5 337.5,307.5 350.0,325.0 362.5,342.0 377.5,350.0 385.0,360.0 395.0,372.5 407.5,381.8 420.0,381.8 425.0,380.0 435.0,380.5 447.5,370.0 457.5,360.0 467.5,351.3 482.5,351.3 492.5,355.5 508.0,356.5 532.5,355.3 540.0,357.0 555.0,363.8 575.0,374.0 585.0,387.5 595.0,400.0 607.5,411.3 616.3,415.8 656.3,415.8 675.0,411.3 697.5,407.5 717.5,406.3 732.5,402.5 745.0,398.8 752.5,390.0 760.0,377.5 767.5,365.0 777.5,352.5 785.5,347.0" fill="none" stroke="#87cefa" stroke-width="2" stroke-linejoin="round"/><polyline points="16.5,492.5 24.0,490.5 32.0,486.5 40.5,436.5" fill="none" stroke="#0ff" stroke-width="1"/><rect x="15" y="490" width="3" height="3" fill="#0ff"/><rect x="22" y="488" width="3" height="3" fill="#0ff"/><rect x="30" y="484" width="3" height="3" fill="#0ff"/><rect x="39" y="434" width="3" height="3" fill="#0ff"/><circle cx="49" cy="419.5" r="3.2" fill="#f0f" shape-rendering="auto"/><polyline points="56.5,425.5 64.5,425.5 72.5,425.5 80.5,425.5 88.5,425.5 96.5,423.5 104.5,388.0 112.5,374.5 120.5,374.5 128.5,299.0 136.5,291.0 144.5,290.5 152.5,290.5 160.5,290.5 168.5,266.5 176.5,190.5" fill="none" stroke="#0ff" stroke-width="1"/><circle cx="57" cy="425.5" r="3.2" fill="#0ff" shape-rendering="auto"/><rect x="63" y="423" width="3" height="3" fill="#0ff"/><rect x="71" y="423" width="3" height="3" fill="#0ff"/><rect x="79" y="423" width="3" height="3" fill="#0ff"/><rect x="87" y="423" width="3" height="3" fill="#0ff"/><rect x="95" y="421" width="3" height="3" fill="#0ff"/><rect x="103" y="386" width="3" height="3" fill="#0ff"/><rect x="111" y="372" width="3" height="3" fill="#0ff"/><rect x="119" y="372" width="3" height="3" fill="#0ff"/><rect x="127" y="296" width="3" height="3" fill="#0ff"/><rect x="135" y="288" width="3" height="3" fill="#0ff"/><rect x="143" y="288" width="3" height="3" fill="#0ff"/><rect x="151" y="288" width="3" height="3" fill="#0ff"/><rect x="159" y="288" width="3" height="3" fill="#0ff"/><rect x="167" y="264" width="3" height="3" fill="#0ff"/><rect x="175" y="188" width="3" height="3" fill="#0ff"/><polyline points="184.5,169.0 192.5,169.0 200.5,169.0 208.5,169.0 216.5,169.0 224.5,169.0 232.5,169.0 240.5,169.0 248.5,169.0 256.5,169.0 264.5,169.0 272.5,169.0 280.5,169.0 288.5,186.0 296.5,186.0 304.5,210.0 312.5,210.0 320.5,213.0 328.5,221.8 336.5,221.8 344.5,221.8 352.5,221.8 360.5,241.8 368.5,256.0 376.5,271.8 384.5,278.0 392.5,283.0 400.5,283.0 408.5,283.0 416.5,286.8 424.5,305.0 432.5,305.0" fill="none" stroke="#f0f" stroke-width="1"/><circle cx="185" cy="169" r="3.2" fill="#f0f" shape-rendering="auto"/><rect x="191" y="166" width="3" height="3" fill="#f0f"/><rect x="199" y="166" width="3" height="3" fill="#f0f"/><rect x="207" y="166" width="3" height="3" fill="#f0f"/><rect x="215" y="166" width="3" height="3" fill="#f0f"/><rect x="223" y="166" width="3" height="3" fill="#f0f"/><rect x="231" y="166" width="3" height="3" fill="#f0f"/><rect x="239" y="166" width="3" height="3" fill="#f0f"/><rect x="247" y="166" width="3" height="3" fill="#f0f"/><rect x="255" y="166" width="3" height="3" fill="#f0f"/><rect x="263" y="166" width="3" height="3" fill="#f0f"/><rect x="271" y="166" width="3" height="3" fill="#f0f"/><rect x="279" y="166" width="3" height="3" fill="#f0f"/><rect x="287" y="184" width="3" height="3" fill="#f0f"/><rect x="295" y="184" width="3" height="3" fill="#f0f"/><rect x="303" y="208" width="3" height="3" fill="#f0f"/><rect x="311" y="208" width="3" height="3" fill="#f0f"/><rect x="319" y="210" width="3" height="3" fill="#f0f"/><rect x="327" y="219" width="3" height="3" fill="#f0f"/><rect x="335" y="219" width="3" height="3" fill="#f0f"/><rect x="343" y="219" width="3" height="3" fill="#f0f"/><rect x="351" y="219" width="3" height="3" fill="#f0f"/><rect x="359" y="239" width="3" height="3" fill="#f0f"/><rect x="367" y="254" width="3" height="3" fill="#f0f"/><rect x="375" y="269" width="3" height="3" fill="#f0f"/><rect x="383" y="276" width="3" height="3" fill="#f0f"/><rect x="391" y="280" width="3" height="3" fill="#f0f"/><rect x="399" y="280" width="3" height="3" fill="#f0f"/><rect x="407" y="280" width="3" height="3" fill="#f0f"/><rect x="415" y="284" width="3" height="3" fill="#f0f"/><rect x="423" y="302" width="3" height="3" fill="#f0f"/><rect x="431" y="302" width="3" height="3" fill="#f0f"/><polyline points="440.5,337.5 448.5,333.5 456.5,333.0 464.5,325.5 472.5,325.0 480.5,325.0 488.5,321.0 496.5,314.0 504.5,314.0 512.5,300.5 520.5,300.0 528.5,300.0 536.5,300.0" fill="none" stroke="#0ff" stroke-width="1"/><circle cx="441" cy="337.5" r="3.2" fill="#0ff" shape-rendering="auto"/><rect x="447" y="331" width="3" height="3" fill="#0ff"/><rect x="455" y="330" width="3" height="3" fill="#0ff"/><rect x="463" y="323" width="3" height="3" fill="#0ff"/><rect x="471" y="322" width="3" height="3" fill="#0ff"/><rect x="479" y="322" width="3" height="3" fill="#0ff"/><rect x="487" y="318" width="3" height="3" fill="#0ff"/><rect x="495" y="312" width="3" height="3" fill="#0ff"/><rect x="503" y="312" width="3" height="3" fill="#0ff"/><rect x="511" y="298" width="3" height="3" fill="#0ff"/><rect x="519" y="298" width="3" height="3" fill="#0ff"/><rect x="527" y="298" width="3" height="3" fill="#0ff"/><rect x="535" y="298" width="3" height="3" fill="#0ff"/><polyline points="544.5,254.5 552.5,268.5 560.5,268.5 568.5,278.0 576.5,278.0 584.5,287.3 592.5,288.0 600.5,306.0 608.5,306.8 616.5,349.3" fill="none" stroke="#f0f" stroke-width="1"/><circle cx="545" cy="254.5" r="3.2" fill="#f0f" shape-rendering="auto"/><rect x="551" y="266" width="3" height="3" fill="#f0f"/><rect x="559" y="266" width="3" height="3" fill="#f0f"/><rect x="567" y="276" width="3" height="3" fill="#f0f"/><rect x="575" y="276" width="3" height="3" fill="#f0f"/><rect x="583" y="285" width="3" height="3" fill="#f0f"/><rect x="591" y="286" width="3" height="3" fill="#f0f"/><rect x="599" y="304" width="3" height="3" fill="#f0f"/><rect x="607" y="304" width="3" height="3" fill="#f0f"/><rect x="615" y="347" width="3" height="3" fill="#f0f"/><polyline points="624.5,371.3 632.5,367.5 640.5,365.0 648.5,364.8 656.5,364.8 664.5,356.0 672.5,343.0 680.5,332.3 688.5,323.0" fill="none" stroke="#0ff" stroke-width="1"/><circle cx="625" cy="371.3" r="3.2" fill="#0ff" shape-rendering="auto"/><rect x="631" y="365" width="3" height="3" fill="#0ff"/><rect x="639" y="362" width="3" height="3" fill="#0ff"/><rect x="647" y="362" width="3" height="3" fill="#0ff"/><rect x="655" y="362" width="3" height="3" fill="#0ff"/><rect x="663" y="354" width="3" height="3" fill="#0ff"/><rect x="671" y="340" width="3" height="3" fill="#0ff"/><rect x="679" y="330" width="3" height="3" fill="#0ff"/><rect x="687" y="320" width="3" height="3" fill="#0ff"/><polyline points="696.5,277.3 704.5,278.0 712.5,298.8 720.5,301.8" fill="none" stroke="#f0f" stroke-width="1"/><circle cx="697" cy="277.3" r="3.2" fill="#f0f" shape-rendering="auto"/><rect x="703" y="276" width="3" height="3" fill="#f0f"/><rect x="711" y="296" width="3" height="3" fill="#f0f"/><rect x="719" y="299" width="3" height="3" fill="#f0f"/><polyline points="728.5,330.0 736.5,321.3 744.5,321.3 752.5,321.3 760.5,321.3 768.5,316.3 776.5,315.8" fill="none" stroke="#0ff" stroke-width="1"/><circle cx="729" cy="330" r="3.2" fill="#0ff" shape-rendering="auto"/><rect x="735" y="319" width="3" height="3" fill="#0ff"/><rect x="743" y="319" width="3" height="3" fill="#0ff"/><rect x="751" y="319" width="3" height="3" fill="#0ff"/><rect x="759" y="319" width="3" height="3" fill="#0ff"/><rect x="767" y="314" width="3" height="3" fill="#0ff"/><rect x="775" y="313" width="3" height="3" fill="#0ff"/><circle cx="785" cy="274.3" r="3.2" fill="#f0f" shape-rendering="auto"/></g><g clip-path="url(#cs)"><polyline points="9.5,552.5 25.0,553.0 50.0,557.5 75.0,552.5 100.0,552.5 125.0,546.0 145.0,545.0 160.0,540.0 175.0,539.5 185.0,541.3 200.0,543.8 217.5,547.0 232.5,557.5 250.0,565.0 265.0,571.3 280.0,575.0 297.5,581.3 312.5,590.0 325.0,596.3 345.0,600.0 360.0,607.5 375.0,612.0 390.0,615.0 407.5,616.3 425.0,613.8 435.0,612.5 450.0,608.8 465.0,603.8 481.0,600.0 497.5,593.8 515.0,587.5 530.0,583.8 545.0,583.8 562.5,590.0 582.5,598.8 600.0,606.3 610.0,610.0 625.0,610.0 642.5,607.5 660.0,602.5 675.0,597.5 690.0,593.8 707.5,588.8 720.0,587.5 730.0,583.8 745.0,585.0 758.0,587.5 785.0,588.0" fill="none" stroke="#7fffd4" stroke-width="2" stroke-linejoin="round"/><polyline points="9.5,547.0 17.5,546.0 25.0,549.0 34.0,556.0 41.0,569.0 50.0,592.0 57.5,536.0 65.5,547.5 74.0,548.0 81.0,550.0 89.0,558.8 97.5,541.0 105.0,525.0 112.5,522.5 121.0,526.0 129.0,533.0 137.0,536.0 145.0,533.0 153.0,533.8 161.0,546.0 169.0,553.8 177.0,562.5 185.0,567.5 193.0,564.5 201.0,568.8 209.0,563.8 217.0,558.8 225.0,595.0 229.0,607.0 233.0,602.0 241.0,568.0 249.0,567.5 257.0,568.0 265.0,590.0 273.0,591.3 281.0,583.8 289.0,596.3 297.0,610.0 305.0,625.0 309.0,636.0 313.0,625.0 321.0,617.5 329.0,612.5 337.0,603.0 345.0,619.5 353.0,620.0 361.0,618.8 369.0,608.8 373.0,602.5 380.0,611.7 387.0,625.0 393.0,627.0 401.0,616.3 409.0,614.0 417.0,610.0 425.0,603.0 433.0,612.5 441.0,581.3 449.0,580.0 457.0,583.8 465.0,585.0 473.0,582.5 481.0,600.0 489.0,567.0 497.0,564.5 505.0,582.5 513.0,575.0 521.0,581.3 529.0,575.0 537.0,587.5 545.0,612.5 553.0,630.0 561.0,630.0 569.0,625.0 577.0,630.0 585.0,640.0 593.0,645.0 601.0,632.5 609.0,617.5 617.0,592.5 625.0,558.8 633.0,557.5 641.0,567.5 649.0,572.5 657.0,582.5 665.0,587.5 673.0,591.3 681.0,595.0 689.0,602.5 697.0,605.0 705.0,608.8 713.0,608.8 721.0,582.5 729.0,558.6 737.0,580.0 745.0,573.7 753.0,587.0 761.0,587.5 769.0,574.5 777.0,572.0 785.0,606.0" fill="none" stroke="#1e90ff" stroke-width="2" stroke-linejoin="round"/><polyline points="9.5,519.5 17.5,525.0 25.0,529.5 34.0,545.0 41.0,565.0 49.5,591.0 53.8,600.0 57.5,602.0 61.0,595.0 67.5,570.0 73.5,550.0 81.5,533.8 89.5,531.3 97.5,531.3 105.0,523.8 112.5,517.5 121.0,511.0 129.0,515.0 137.0,522.5 145.0,531.0 153.0,532.5 161.0,533.8 169.0,538.0 177.0,565.0 185.0,600.0 193.0,627.5 201.0,633.8 209.0,631.3 217.0,623.8 225.0,627.5 233.0,632.5 241.0,630.0 249.0,617.5 257.0,592.0 265.0,575.0 273.0,574.3 281.0,581.3 289.0,588.8 297.0,598.8 305.0,617.5 313.0,640.0 321.0,643.0 329.0,635.0 337.0,625.0 345.0,620.0 353.0,621.3 361.0,630.0 369.0,633.8 377.0,628.8 385.0,625.0 393.0,630.0 401.0,636.3 409.0,636.3 417.0,627.5 425.0,612.5 433.0,601.3 441.0,592.5 449.0,575.0 457.0,563.8 465.0,553.8 473.0,553.8 481.0,565.5 489.0,561.3 497.0,555.0 505.0,552.5 513.0,560.0 521.0,563.8 529.0,567.5 537.0,571.3 545.0,585.0 553.0,610.0 561.0,637.5 569.0,653.8 577.0,656.3 585.0,656.3 593.0,657.5 601.0,656.3 609.0,647.5 617.0,617.5 625.0,577.5 633.0,540.0 641.0,522.5 649.0,523.8 657.0,535.0 665.0,552.5 673.0,572.5 681.0,592.5 689.0,612.5 697.0,631.3 705.0,643.8 713.0,645.0 721.0,638.8 729.0,617.5 737.0,590.0 745.0,572.5 753.0,577.5 761.0,590.0 769.0,601.3 777.0,600.5 785.0,603.0" fill="none" stroke="#f00" stroke-width="1"/><polyline points="9.5,527.0 17.5,528.8 25.0,533.8 34.0,557.5 41.0,601.0 49.5,637.5 53.8,602.5 57.5,571.0 65.5,546.0 73.5,525.0 81.5,531.0 89.5,536.3 97.5,528.0 105.0,515.0 112.5,509.0 121.0,511.0 129.0,517.5 137.0,526.0 145.0,534.0 153.0,529.0 161.0,532.5 167.5,552.5 172.5,577.5 177.0,620.0 185.0,636.3 193.0,635.0 201.0,633.8 209.0,625.0 217.0,620.0 225.0,632.5 233.0,640.0 241.0,625.0 249.0,587.5 257.0,561.5 265.0,577.5 273.0,580.0 281.0,585.0 289.0,592.5 297.0,610.0 303.8,636.0 308.8,648.0 316.0,643.8 325.0,635.0 332.5,620.0 340.0,616.7 350.0,621.7 356.7,631.7 364.0,640.0 375.0,618.3 380.8,618.3 385.8,626.7 393.3,641.7 401.7,642.5 409.0,627.5 417.0,610.0 425.0,601.3 433.0,600.0 441.0,570.0 449.0,560.0 457.0,543.0 465.0,558.0 473.0,560.0 481.0,566.3 489.0,555.0 497.0,552.5 505.0,549.5 513.0,565.0 521.0,571.3 529.0,570.0 537.0,580.0 545.0,607.5 553.0,640.0 561.0,665.0 569.0,655.0 577.0,657.5 585.0,656.3 593.0,661.3 601.0,650.0 609.0,630.0 617.0,575.0 625.0,527.5 633.0,516.3 641.0,522.5 649.0,532.5 657.0,550.0 665.0,572.5 673.0,592.5 681.0,610.0 689.0,635.0 697.0,647.0 705.0,647.5 713.0,643.8 721.0,622.5 729.0,582.5 737.0,567.5 745.0,568.8 753.0,596.3 761.0,601.3 769.0,604.5 777.0,594.5 785.0,607.5" fill="none" stroke="#ff0" stroke-width="1"/><rect x="7" y="570" width="5" height="21" fill="#6b8e23"/><rect x="15" y="574" width="5" height="17" fill="#6b8e23"/><rect x="23" y="581" width="5" height="10" fill="#6b8e23"/><rect x="31" y="590" width="5" height="1" fill="#6b8e23"/><rect x="39" y="591" width="5" height="11" fill="#6b8e23"/><rect x="47" y="591" width="5" height="25" fill="#6b8e23"/><rect x="55" y="588" width="5" height="3" fill="#6b8e23"/><rect x="63" y="574" width="5" height="17" fill="#6b8e23"/><rect x="71" y="567" width="5" height="24" fill="#6b8e23"/><rect x="79" y="564" width="5" height="27" fill="#6b8e23"/><rect x="87" y="569" width="5" height="22" fill="#6b8e23"/><rect x="95" y="562" width="5" height="29" fill="#6b8e23"/><rect x="103" y="529" width="5" height="62" fill="#6b8e23"/><rect x="111" y="508" width="5" height="83" fill="#6b8e23"/><rect x="119" y="504" width="5" height="87" fill="#6b8e23"/><rect x="127" y="510" width="5" height="81" fill="#6b8e23"/><rect x="135" y="522" width="5" height="69" fill="#6b8e23"/><rect x="143" y="532" width="5" height="59" fill="#6b8e23"/><rect x="151" y="542" width="5" height="49" fill="#6b8e23"/><rect x="159" y="562" width="5" height="29" fill="#6b8e23"/><rect x="167" y="584" width="5" height="7" fill="#6b8e23"/><rect x="175" y="591" width="5" height="15" fill="#6b8e23"/><rect x="183" y="591" width="5" height="31" fill="#6b8e23"/><rect x="191" y="591" width="5" height="41" fill="#6b8e23"/><rect x="199" y="591" width="5" height="49" fill="#6b8e23"/><rect x="207" y="591" width="5" height="53" fill="#6b8e23"/><rect x="215" y="591" width="5" height="53" fill="#6b8e23"/><rect x="223" y="591" width="5" height="67" fill="#6b8e23"/><rect x="231" y="591" width="5" height="73" fill="#6b8e23"/><rect x="239" y="591" width="5" height="59" fill="#6b8e23"/><rect x="247" y="591" width="5" height="49" fill="#6b8e23"/><rect x="255" y="591" width="5" height="41" fill="#6b8e23"/><rect x="263" y="591" width="5" height="43" fill="#6b8e23"/><rect x="271" y="591" width="5" height="44" fill="#6b8e23"/><rect x="279" y="591" width="5" height="39" fill="#6b8e23"/><rect x="287" y="591" width="5" height="46" fill="#6b8e23"/><rect x="295" y="591" width="5" height="51" fill="#6b8e23"/><rect x="303" y="591" width="5" height="79" fill="#6b8e23"/><rect x="311" y="591" width="5" height="87" fill="#6b8e23"/><rect x="319" y="591" width="5" height="87" fill="#6b8e23"/><rect x="327" y="591" width="5" height="83" fill="#6b8e23"/><rect x="335" y="591" width="5" height="67" fill="#6b8e23"/><rect x="343" y="591" width="5" height="69" fill="#6b8e23"/><rect x="351" y="591" width="5" height="63" fill="#6b8e23"/><rect x="359" y="591" width="5" height="57" fill="#6b8e23"/><rect x="367" y="591" width="5" height="41" fill="#6b8e23"/><rect x="375" y="591" width="5" height="31" fill="#6b8e23"/><rect x="383" y="591" width="5" height="34" fill="#6b8e23"/><rect x="391" y="591" width="5" height="35" fill="#6b8e23"/><rect x="399" y="591" width="5" height="29" fill="#6b8e23"/><rect x="407" y="591" width="5" height="26" fill="#6b8e23"/><rect x="415" y="591" width="5" height="19" fill="#6b8e23"/><rect x="423" y="591" width="5" height="11" fill="#6b8e23"/><rect x="431" y="591" width="5" height="11" fill="#6b8e23"/><rect x="439" y="584" width="5" height="7" fill="#6b8e23"/><rect x="447" y="572" width="5" height="19" fill="#6b8e23"/><rect x="455" y="565" width="5" height="26" fill="#6b8e23"/><rect x="463" y="562" width="5" height="29" fill="#6b8e23"/><rect x="471" y="560" width="5" height="31" fill="#6b8e23"/><rect x="479" y="568" width="5" height="23" fill="#6b8e23"/><rect x="487" y="557" width="5" height="34" fill="#6b8e23"/><rect x="495" y="552" width="5" height="39" fill="#6b8e23"/><rect x="503" y="557" width="5" height="34" fill="#6b8e23"/><rect x="511" y="559" width="5" height="32" fill="#6b8e23"/><rect x="519" y="562" width="5" height="29" fill="#6b8e23"/><rect x="527" y="563" width="5" height="28" fill="#6b8e23"/><rect x="535" y="572" width="5" height="19" fill="#6b8e23"/><rect x="543" y="590" width="5" height="1" fill="#6b8e23"/><rect x="551" y="591" width="5" height="24" fill="#6b8e23"/><rect x="559" y="591" width="5" height="41" fill="#6b8e23"/><rect x="567" y="591" width="5" height="45" fill="#6b8e23"/><rect x="575" y="591" width="5" height="49" fill="#6b8e23"/><rect x="583" y="591" width="5" height="57" fill="#6b8e23"/><rect x="591" y="591" width="5" height="59" fill="#6b8e23"/><rect x="599" y="591" width="5" height="53" fill="#6b8e23"/><rect x="607" y="591" width="5" height="39" fill="#6b8e23"/><rect x="615" y="591" width="5" height="21" fill="#6b8e23"/><rect x="623" y="578" width="5" height="13" fill="#6b8e23"/><rect x="631" y="554" width="5" height="37" fill="#6b8e23"/><rect x="639" y="540" width="5" height="51" fill="#6b8e23"/><rect x="647" y="534" width="5" height="57" fill="#6b8e23"/><rect x="655" y="540" width="5" height="51" fill="#6b8e23"/><rect x="663" y="546" width="5" height="45" fill="#6b8e23"/><rect x="671" y="557" width="5" height="34" fill="#6b8e23"/><rect x="679" y="568" width="5" height="23" fill="#6b8e23"/><rect x="687" y="582" width="5" height="9" fill="#6b8e23"/><rect x="695" y="591" width="5" height="1" fill="#6b8e23"/><rect x="703" y="591" width="5" height="9" fill="#6b8e23"/><rect x="711" y="591" width="5" height="13" fill="#6b8e23"/><rect x="719" y="591" width="5" height="6" fill="#6b8e23"/><rect x="727" y="584" width="5" height="7" fill="#6b8e23"/><rect x="735" y="580" width="5" height="11" fill="#6b8e23"/><rect x="743" y="575" width="5" height="16" fill="#6b8e23"/><rect x="751" y="576" width="5" height="15" fill="#6b8e23"/><rect x="759" y="577" width="5" height="14" fill="#6b8e23"/><rect x="767" y="575" width="5" height="16" fill="#6b8e23"/><rect x="775" y="574" width="5" height="17" fill="#6b8e23"/><rect x="783" y="586" width="5" height="5" fill="#6b8e23"/></g><rect x="8" y="104" width="979" height="1" fill="#fff"/><rect x="8" y="104" width="1" height="389" fill="#fff"/><rect x="986" y="104" width="1" height="389" fill="#fff"/><rect x="8" y="492" width="979" height="1" fill="#fff"/><rect x="8" y="494" width="979" height="1" fill="#fff"/><rect x="8" y="494" width="1" height="194" fill="#fff"/><rect x="986" y="494" width="1" height="194" fill="#fff"/><rect x="8" y="687" width="979" height="1" fill="#fff"/><rect x="987" y="121" width="3" height="1" fill="#fff"/><text x="992" y="124.3" font-size="9.600" fill="#fff" textLength="27" lengthAdjust="spacingAndGlyphs">1.9150</text><rect x="987" y="153" width="3" height="1" fill="#fff"/><text x="992" y="156.3" font-size="9.600" fill="#fff" textLength="27" lengthAdjust="spacingAndGlyphs">1.9110</text><rect x="987" y="188" width="3" height="1" fill="#fff"/><text x="992" y="191.3" font-size="9.600" fill="#fff" textLength="27" lengthAdjust="spacingAndGlyphs">1.9065</text><rect x="987" y="220" width="3" height="1" fill="#fff"/><text x="992" y="223.3" font-size="9.600" fill="#fff" textLength="27" lengthAdjust="spacingAndGlyphs">1.9025</text><rect x="987" y="255" width="3" height="1" fill="#fff"/><text x="992" y="258.3" font-size="9.600" fill="#fff" textLength="27" lengthAdjust="spacingAndGlyphs">1.8980</text><rect x="987" y="287" width="3" height="1" fill="#fff"/><text x="992" y="290.3" font-size="9.600" fill="#fff" textLength="27" lengthAdjust="spacingAndGlyphs">1.8940</text><rect x="987" y="322" width="3" height="1" fill="#fff"/><text x="992" y="325.3" font-size="9.600" fill="#fff" textLength="27" lengthAdjust="spacingAndGlyphs">1.8895</text><rect x="987" y="354" width="3" height="1" fill="#fff"/><text x="992" y="357.3" font-size="9.600" fill="#fff" textLength="27" lengthAdjust="spacingAndGlyphs">1.8855</text><rect x="987" y="389" width="3" height="1" fill="#fff"/><text x="992" y="392.3" font-size="9.600" fill="#fff" textLength="27" lengthAdjust="spacingAndGlyphs">1.8810</text><rect x="987" y="421" width="3" height="1" fill="#fff"/><text x="992" y="424.3" font-size="9.600" fill="#fff" textLength="27" lengthAdjust="spacingAndGlyphs">1.8770</text><rect x="987" y="456" width="3" height="1" fill="#fff"/><text x="992" y="459.3" font-size="9.600" fill="#fff" textLength="27" lengthAdjust="spacingAndGlyphs">1.8725</text><rect x="987" y="488" width="3" height="1" fill="#fff"/><text x="992" y="491.3" font-size="9.600" fill="#fff" textLength="27" lengthAdjust="spacingAndGlyphs">1.8685</text><rect x="990" y="320" width="34" height="11" fill="#fff"/><text x="992" y="329.500" font-size="9.600" fill="#000" textLength="27" lengthAdjust="spacingAndGlyphs">1.8890</text><rect x="987" y="534" width="2" height="1" fill="#fff"/><text x="989" y="537.3" font-size="9.600" fill="#fff" textLength="10" lengthAdjust="spacingAndGlyphs">80</text><rect x="987" y="553" width="2" height="1" fill="#fff"/><text x="989" y="556.3" font-size="9.600" fill="#fff" textLength="10" lengthAdjust="spacingAndGlyphs">70</text><rect x="987" y="629" width="2" height="1" fill="#fff"/><text x="989" y="632.3" font-size="9.600" fill="#fff" textLength="10" lengthAdjust="spacingAndGlyphs">30</text><rect x="987" y="648" width="2" height="1" fill="#fff"/><text x="989" y="651.3" font-size="9.600" fill="#fff" textLength="10" lengthAdjust="spacingAndGlyphs">20</text><text x="989" y="505" font-size="9.600" fill="#fff" textLength="15" lengthAdjust="spacingAndGlyphs">100</text><text x="989" y="685" font-size="9.600" fill="#fff">0</text><rect x="9" y="688" width="1" height="3" fill="#fff"/><text x="7.5" y="700.300" font-size="9.600" fill="#fff" textLength="48" lengthAdjust="spacingAndGlyphs">2 Aug 2006</text><rect x="73" y="688" width="1" height="3" fill="#fff"/><text x="71.5" y="700.300" font-size="9.600" fill="#fff" textLength="50" lengthAdjust="spacingAndGlyphs">3 Aug 20:00</text><rect x="137" y="688" width="1" height="3" fill="#fff"/><text x="135.5" y="700.300" font-size="9.600" fill="#fff" textLength="50" lengthAdjust="spacingAndGlyphs">7 Aug 04:00</text><rect x="201" y="688" width="1" height="3" fill="#fff"/><text x="199.5" y="700.300" font-size="9.600" fill="#fff" textLength="50" lengthAdjust="spacingAndGlyphs">8 Aug 12:00</text><rect x="265" y="688" width="1" height="3" fill="#fff"/><text x="263.5" y="700.300" font-size="9.600" fill="#fff" textLength="50" lengthAdjust="spacingAndGlyphs">9 Aug 20:00</text><rect x="329" y="688" width="1" height="3" fill="#fff"/><text x="327.5" y="700.300" font-size="9.600" fill="#fff" textLength="55.5" lengthAdjust="spacingAndGlyphs">11 Aug 04:00</text><rect x="393" y="688" width="1" height="3" fill="#fff"/><text x="391.5" y="700.300" font-size="9.600" fill="#fff" textLength="55.5" lengthAdjust="spacingAndGlyphs">14 Aug 12:00</text><rect x="457" y="688" width="1" height="3" fill="#fff"/><text x="455.5" y="700.300" font-size="9.600" fill="#fff" textLength="55.5" lengthAdjust="spacingAndGlyphs">15 Aug 20:00</text><rect x="521" y="688" width="1" height="3" fill="#fff"/><text x="519.5" y="700.300" font-size="9.600" fill="#fff" textLength="55.5" lengthAdjust="spacingAndGlyphs">17 Aug 04:00</text><rect x="585" y="688" width="1" height="3" fill="#fff"/><text x="583.5" y="700.300" font-size="9.600" fill="#fff" textLength="55.5" lengthAdjust="spacingAndGlyphs">18 Aug 12:00</text><rect x="649" y="688" width="1" height="3" fill="#fff"/><text x="647.5" y="700.300" font-size="9.600" fill="#fff" textLength="55.5" lengthAdjust="spacingAndGlyphs">21 Aug 20:00</text><rect x="713" y="688" width="1" height="3" fill="#fff"/><text x="711.5" y="700.300" font-size="9.600" fill="#fff" textLength="55.5" lengthAdjust="spacingAndGlyphs">23 Aug 04:00</text><rect x="777" y="688" width="1" height="3" fill="#fff"/><text x="775.5" y="700.300" font-size="9.600" fill="#fff" textLength="55.5" lengthAdjust="spacingAndGlyphs">24 Aug 12:00</text><text x="12.5" y="116" font-size="9.600" fill="#fff" textLength="54.5" lengthAdjust="spacingAndGlyphs">GBPUSD,H4</text><text x="73" y="116" font-size="9.600" fill="#fff" textLength="120" lengthAdjust="spacingAndGlyphs">1.8938 1.8972 1.8874 1.8890</text><text x="12.5" y="508" font-size="9.600" fill="#fff" textLength="62.5" lengthAdjust="spacingAndGlyphs">RSI(8) 42.4010</text><text x="82" y="508" font-size="9.600" fill="#fff" textLength="80" lengthAdjust="spacingAndGlyphs">=&gt;MA(14) 51.3233</text><text x="169.3" y="508" font-size="9.600" fill="#fff" textLength="120.7" lengthAdjust="spacingAndGlyphs">Stoch(7,3,3) 40.8602 44.0501</text><text x="297" y="508" font-size="9.600" fill="#fff" textLength="104" lengthAdjust="spacingAndGlyphs">OsMA(12,26,9) 0.000162</text><path d="M784.800 105h9.400l-4.700 5.200z" fill="#7c8ea0" shape-rendering="auto"/></svg><div class="abs" style="left:0;top:701px;width:1024px;height:2px;background:#fff"></div><div class="abs" style="left:0;top:703px;width:1024px;height:1px;background:#404040"></div><div id="tabs" style="top:704px;height:17px;background:#ececec"><div class="abs" style="left:0;top:0;width:2px;height:17px;background:#9c9ca2"></div><div class="tsep" style="left:263px;top:2px;height:13px"></div><div class="tsep" style="left:352px;top:2px;height:13px"></div><div class="tsep" style="left:444px;top:2px;height:13px"></div><div class="tsep" style="left:520px;top:2px;height:13px"></div><div class="tsep" style="left:608px;top:2px;height:13px"></div><div class="tsep" style="left:696px;top:2px;height:13px"></div><div class="tsep" style="left:784px;top:2px;height:13px"></div><div class="tsep" style="left:860px;top:2px;height:13px"></div><div class="abs" style="left:996px;top:6px;width:0;height:0;border:3px solid transparent;border-right:4px solid #8a8a8a;border-left:0"></div><div class="abs" style="left:1013px;top:6px;width:0;height:0;border:3px solid transparent;border-left:4px solid #8a8a8a;border-right:0"></div></div>
<div class="abs" style="left:0;top:721px;width:1024px;height:2px;background:#fbfbfb"></div><div class="abs" style="left:92.5px;top:703px;width:79px;height:19px;background:#fff;border:1px solid #000;border-top:0"></div><svg class="abs" style="left:0;top:704px" width="1024" height="17" viewBox="4 708 1024 17" font-family="Liberation Sans, sans-serif" font-size="11"><text x="19.5" y="720" fill="#8e8e8e" textLength="63" lengthAdjust="spacingAndGlyphs">USDJPY,Daily</text><text x="107.5" y="720" fill="#000" textLength="55.5" lengthAdjust="spacingAndGlyphs">GBPUSD,H4</text><text x="187.5" y="720" fill="#8e8e8e" textLength="68" lengthAdjust="spacingAndGlyphs">USDCAD,Daily</text><text x="277" y="720" fill="#8e8e8e" textLength="67" lengthAdjust="spacingAndGlyphs">EURUSD,Daily</text><text x="367" y="720" fill="#8e8e8e" textLength="68" lengthAdjust="spacingAndGlyphs">AUDUSD,Daily</text><text x="458" y="720" fill="#8e8e8e" textLength="54" lengthAdjust="spacingAndGlyphs">EURJPY,H4</text><text x="533.5" y="720" fill="#8e8e8e" textLength="66.5" lengthAdjust="spacingAndGlyphs">USDCHF,Daily</text><text x="621.5" y="720" fill="#8e8e8e" textLength="66.5" lengthAdjust="spacingAndGlyphs">EURCHF,Daily</text><text x="710.5" y="720" fill="#8e8e8e" textLength="67" lengthAdjust="spacingAndGlyphs">EURGBP,Daily</text><text x="798.5" y="720" fill="#8e8e8e" textLength="53.5" lengthAdjust="spacingAndGlyphs">GOLD,Daily</text></svg>
<div id="status" style="top:723px;height:20px"><div class="st" style="left:158px;top:6px">Default</div><div class="st" style="left:322px;top:6px">2006.08.17 04:00</div><div class="st" style="left:438px;top:6px">O: 1.8975</div><div class="st" style="left:524px;top:6px">H: 1.8978</div><div class="st" style="left:610px;top:6px">L: 1.8962</div><div class="st" style="left:695.75px;top:6px">C: 1.8968</div><div class="st" style="left:782px;top:6px">V: 495</div><div class="st" style="left:922.5px;top:6px">47/0 kb</div><div class="ssep" style="left:152px;top:4px;height:16px"></div><div class="ssep" style="left:316px;top:4px;height:16px"></div><div class="ssep" style="left:432px;top:4px;height:16px"></div><div class="ssep" style="left:518px;top:4px;height:16px"></div><div class="ssep" style="left:604px;top:4px;height:16px"></div><div class="ssep" style="left:690px;top:4px;height:16px"></div><div class="ssep" style="left:775px;top:4px;height:16px"></div><div class="ssep" style="left:862px;top:4px;height:16px"></div><svg class="abs" style="left:868px;top:6px" width="26" height="13" shape-rendering="crispEdges"><rect x="0" y="0" width="2" height="10" fill="#5a7a08"/><rect x="0" y="10" width="2" height="2" fill="#a01414"/><rect x="3" y="0" width="2" height="9" fill="#5a7a08"/><rect x="3" y="9" width="2" height="3" fill="#a01414"/><rect x="6" y="0" width="2" height="8" fill="#5a7a08"/><rect x="6" y="8" width="2" height="4" fill="#a01414"/><rect x="9" y="0" width="2" height="7" fill="#5a7a08"/><rect x="9" y="7" width="2" height="5" fill="#a01414"/><rect x="12" y="0" width="2" height="6" fill="#5a7a08"/><rect x="12" y="6" width="2" height="6" fill="#a01414"/><rect x="15" y="0" width="2" height="5" fill="#5a7a08"/><rect x="15" y="5" width="2" height="7" fill="#a01414"/><rect x="18" y="0" width="2" height="4" fill="#5a7a08"/><rect x="18" y="4" width="2" height="8" fill="#a01414"/><rect x="21" y="0" width="2" height="2" fill="#5a7a08"/><rect x="21" y="2" width="2" height="10" fill="#a01414"/></svg><svg class="abs" style="left:1008px;top:5px" width="16" height="16"><path d="M15 1L1 15M15 5L5 15M15 9L9 15M15 13L13 15" stroke="#b0b0b0" stroke-width="1.4"/></svg></div>
<div class="abs" style="left:1px;top:718px;width:126px;height:25px;background:#c6c6c6;border:1px solid #f4f4f4;border-right:1px solid #303030;border-bottom:2px solid #303030"></div><svg class="abs" style="left:1px;top:718px" width="126" height="25" viewBox="5 722 126 25"><rect x="8.5" y="724.5" width="18.5" height="19" fill="#c6c6c6" stroke="#fff" stroke-width="1"/><path d="M27 724.5v19h-18.5" fill="none" stroke="#6a6a6a" stroke-width="1"/><rect x="28.5" y="724.5" width="38.5" height="19" fill="#c6c6c6" stroke="#fff" stroke-width="1"/><path d="M67 724.5v19h-38.5" fill="none" stroke="#6a6a6a" stroke-width="1"/><rect x="68.5" y="724.5" width="18.5" height="19" fill="#c6c6c6" stroke="#fff" stroke-width="1"/><path d="M87 724.5v19h-18.5" fill="none" stroke="#6a6a6a" stroke-width="1"/><rect x="88.5" y="724.5" width="18.5" height="19" fill="#c6c6c6" stroke="#fff" stroke-width="1"/><path d="M107 724.5v19h-18.5" fill="none" stroke="#6a6a6a" stroke-width="1"/><rect x="108.5" y="724.5" width="19" height="19" fill="#c6c6c6" stroke="#fff" stroke-width="1"/><path d="M127.5 724.5v19h-19" fill="none" stroke="#6a6a6a" stroke-width="1"/><path d="M11.500 735v-4a3.500 3.500 0 0 1 6.500 -1.500a3.500 3.500 0 0 1 6.500 1.500v4h-4v-3.500h-5v3.500z" fill="#ffee00" stroke="#000" stroke-width="0.9"/><text x="10" y="742" font-family="Liberation Serif,serif" font-weight="bold" font-size="11" fill="#1020e0">A</text><path d="M19.500 735.500q3-3.500 6-.5M26 738.500q-3 4-6.500 1" stroke="#e01010" stroke-width="1.700" fill="none"/><text x="30.500" y="741" font-family="Noto Serif CJK SC,Noto Sans CJK SC,serif" font-weight="500" font-size="17" fill="#000" textLength="34.500" lengthAdjust="spacingAndGlyphs">标准</text><circle cx="78" cy="734.600" r="6.300" fill="#000"/><circle cx="74.500" cy="731.300" r="5.500" fill="#c6c6c6"/><rect x="93.500" y="733.500" width="2" height="2" fill="none" stroke="#000" stroke-width="0.9"/><path d="M99.500 733.500h2v2.500l-1.200 1.200v-1.700h-.8z" fill="#000"/><rect x="110" y="730" width="16" height="10" fill="#9a9a9a"/><path d="M110.500 731.500h15M110.500 734h15M110.500 736.500h15" stroke="#ececec" stroke-width="1.600" stroke-dasharray="2.500 1"/><path d="M113 738.800h10" stroke="#ececec" stroke-width="1.200"/></svg>
<div class="abs" style="left:0;top:743px;width:1024px;height:1px;background:#6a6a5a"></div><div class="abs" style="left:0;top:744px;width:1024px;height:4px;background:linear-gradient(#efecc8,#dcd6a6)"></div></div>
</body></html>
